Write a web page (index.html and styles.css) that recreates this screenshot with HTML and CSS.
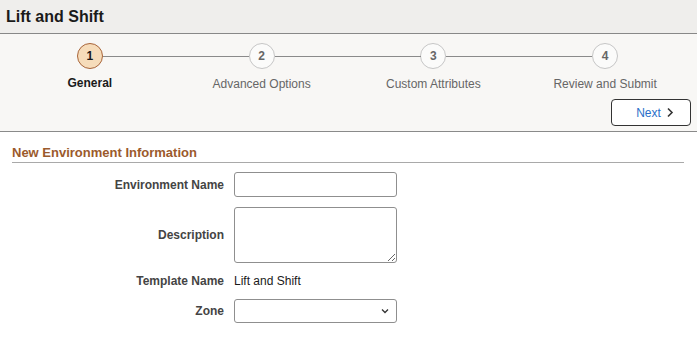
FILE: index.html
```html
<!DOCTYPE html>
<html>
<head>
    <title>Lift and Shift</title>
    <link rel="stylesheet" href="styles.css">
</head>
<body>
    <div class="page-header">
        <h1>Lift and Shift</h1>
    </div>
    <div class="train">
        <div class="steps">
            <div class="step active first">
                <div class="step-circle">1</div>
                <div class="step-label">General</div>
            </div>
            <div class="step">
                <div class="step-circle">2</div>
                <div class="step-label">Advanced Options</div>
            </div>
            <div class="step">
                <div class="step-circle">3</div>
                <div class="step-label">Custom Attributes</div>
            </div>
            <div class="step last">
                <div class="step-circle">4</div>
                <div class="step-label">Review and Submit</div>
            </div>
        </div>
        <div class="train-actions">
            <button type="button" class="next-btn">Next
                <svg width="8" height="11" viewBox="0 0 8 11"><path d="M2 1.5 L6 5.5 L2 9.5" fill="none" stroke="#333" stroke-width="1.6"/></svg>
            </button>
        </div>
    </div>
    <div class="section">
        <h2>New Environment Information</h2>
        <div class="form-grid">
            <label for="envName">Environment Name</label>
            <input type="text" id="envName" class="field">
            <label for="desc">Description</label>
            <textarea id="desc" class="field area"></textarea>
            <label>Template Name</label>
            <span class="value">Lift and Shift</span>
            <label for="zone">Zone</label>
            <div class="select-wrap">
                <select id="zone" class="field select">
                    <option></option>
                </select>
                <svg class="select-arrow" width="8" height="6" viewBox="0 0 8 6"><path d="M1 1.5 L4 4.5 L7 1.5" fill="none" stroke="#333" stroke-width="1.3"/></svg>
            </div>
        </div>
    </div>
</body>
</html>
```
FILE: styles.css
```css
body {
    margin: 0;
    background-color: #ffffff;
    font-family: "Liberation Sans", Arial, sans-serif;
    color: #333333;
}
.page-header {
    height: 33px;
    background-color: #efeeec;
    border-bottom: 1px solid #888888;
    display: flex;
    align-items: center;
    padding-left: 6px;
}
.page-header h1 {
    margin: 0;
    font-size: 16px;
    font-weight: bold;
    color: #1a1a1a;
}
.train {
    background-color: #f8f7f5;
    border-bottom: 1px solid #8a8a8a;
    padding: 9px 6px 5px 4px;
}
.steps {
    display: flex;
}
.step {
    width: 172px;
    display: flex;
    flex-direction: column;
    align-items: center;
    position: relative;
}
.step::before,
.step::after {
    content: "";
    position: absolute;
    top: 13px;
    height: 1px;
    background: #8a8a8a;
    width: 73px;
}
.step::before {
    left: 0;
}
.step::after {
    right: 0;
}
.step.first::before,
.step.last::after {
    display: none;
}
.step-circle {
    width: 24px;
    height: 24px;
    border: 1px solid #c6c6c6;
    border-radius: 50%;
    background: #fbfbfa;
    display: flex;
    justify-content: center;
    align-items: center;
    font-size: 12px;
    font-weight: bold;
    color: #666666;
}
.step-label {
    margin-top: 8px;
    font-size: 12px;
    color: #666666;
}
.step.active .step-circle {
    background: #f6dcba;
    border-color: #a8653a;
    color: #1a1a1a;
}
.step.active .step-label {
    font-weight: bold;
    color: #1a1a1a;
    margin-top: 7px;
}
.train-actions {
    display: flex;
    justify-content: flex-end;
    margin-top: 8px;
}
.next-btn {
    width: 80px;
    height: 27px;
    border: 1px solid #333333;
    border-radius: 4px;
    background: #ffffff;
    color: #2a6fc9;
    font-family: "Liberation Sans", Arial, sans-serif;
    font-size: 12px;
    display: flex;
    align-items: center;
    justify-content: center;
    gap: 5px;
    padding: 0 0 0 8px;
    cursor: pointer;
}
.section {
    padding: 13px 13px 0 12px;
}
.section h2 {
    margin: 0;
    font-size: 13px;
    font-weight: bold;
    color: #9b5a2c;
    padding-bottom: 2px;
    border-bottom: 1px solid #a9a9a9;
}
.form-grid {
    display: grid;
    grid-template-columns: 212px 163px;
    column-gap: 10px;
    row-gap: 10px;
    margin-top: 9px;
}
.form-grid label {
    justify-self: end;
    align-self: center;
    font-size: 12px;
    font-weight: bold;
    color: #444444;
}
.field {
    box-sizing: border-box;
    width: 163px;
    height: 25px;
    border: 1px solid #8f8f8f;
    border-radius: 3px;
    background: #ffffff;
    font-family: "Liberation Sans", Arial, sans-serif;
    font-size: 12px;
    margin: 0;
    display: block;
}
.field.area {
    height: 56px;
    resize: both;
}
.select-wrap {
    position: relative;
    width: 163px;
}
.field.select {
    height: 24px;
    appearance: none;
    -webkit-appearance: none;
    padding: 0 20px 0 4px;
}
.select-arrow {
    position: absolute;
    right: 8px;
    top: 9px;
    pointer-events: none;
}
.value {
    font-size: 12px;
    color: #1a1a1a;
    line-height: 16px;
}
```
